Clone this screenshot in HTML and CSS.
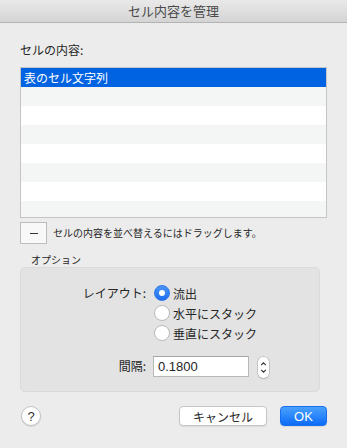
FILE: index.html
```html
<!DOCTYPE html>
<html lang="ja">
<head>
	<meta charset="UTF-8">
	<title>セル内容を管理</title>
	<link rel="stylesheet" href="styles.css">
</head>
<body>
	<!-- ダイアログ全体 -->
	<div class="window">
		<div class="titlebar">セル内容を管理</div>

		<div class="content">
			<div class="field-label">セルの内容:</div>

			<!-- セルの内容リスト -->
			<ul class="list">
				<li class="selected">表のセル文字列</li>
				<li></li>
				<li></li>
				<li></li>
				<li></li>
				<li></li>
				<li></li>
				<li></li>
			</ul>

			<div class="list-tools">
				<button class="minus-btn"><span class="dash"></span></button>
				<span class="hint">セルの内容を並べ替えるにはドラッグします。</span>
			</div>

			<div class="group-title">オプション</div>
			<div class="group">
				<div class="form-row">
					<div class="row-label">レイアウト:</div>
					<div class="radios">
						<label class="radio-item"><span class="radio checked"></span>流出</label>
						<label class="radio-item"><span class="radio"></span>水平にスタック</label>
						<label class="radio-item"><span class="radio"></span>垂直にスタック</label>
					</div>
				</div>
				<div class="form-row spacing-row">
					<div class="row-label">間隔:</div>
					<div class="number-field">0.1800</div>
					<div class="stepper">
						<svg width="11" height="21" viewBox="0 0 11 21">
							<path d="M3.2 8.2 L5.5 5.8 L7.8 8.2" fill="none" stroke="#333" stroke-width="1.1"/>
							<path d="M3.2 12.8 L5.5 15.2 L7.8 12.8" fill="none" stroke="#333" stroke-width="1.1"/>
						</svg>
					</div>
				</div>
			</div>

			<div class="buttons">
				<button class="help-btn">?</button>
				<div class="spacer"></div>
				<button class="push-btn">キャンセル</button>
				<button class="push-btn default">OK</button>
			</div>
		</div>
	</div>
</body>
</html>
```

FILE: styles.css
```css
*{
	margin: 0;
	padding: 0;
	box-sizing: border-box;
}

body{
	background-color: #ececec;
	font-family: "Noto Sans CJK JP", "Liberation Sans", sans-serif;
	color: #262626;
}

.window{
	width: 347px;
	height: 448px;
	background-color: #ececec;
	overflow: hidden;
}

/*タイトルバー*/
.titlebar{
	height: 23px;
	line-height: 22px;
	text-align: center;
	font-size: 13px;
	color: #4a4a4a;
	background: linear-gradient(#e9e9e9, #d4d4d4);
	border-bottom: 1px solid #b3b3b3;
}

.content{
	padding: 0 20px;
}

.field-label{
	margin-top: 19px;
	font-size: 12px;
	line-height: 16px;
}

/*リスト*/
.list{
	list-style: none;
	margin-top: 9px;
	height: 151px;
	border: 1px solid #c4c4c4;
	background-color: #fff;
	overflow: hidden;
}

.list li{
	height: 19px;
	line-height: 19px;
	font-size: 12px;
	padding-left: 3px;
}

.list li:nth-child(even){
	background-color: #f4f5f5;
}

.list li.selected{
	background-color: #0063e1;
	color: #fff;
}

.list-tools{
	display: flex;
	align-items: center;
	margin-top: 4px;
}

.minus-btn{
	width: 27px;
	height: 22px;
	border: 1px solid #bdbdbd;
	background-color: #f8f8f8;
	display: flex;
	align-items: center;
	justify-content: center;
}

.minus-btn .dash{
	display: block;
	width: 8px;
	height: 1px;
	background-color: #333;
}

.hint{
	margin-left: 6px;
	font-size: 10px;
	line-height: 14px;
}

.group-title{
	margin-top: 9px;
	padding-left: 11px;
	font-size: 10px;
	line-height: 14px;
}

/*オプションのボックス*/
.group{
	width: 300px;
	height: 125px;
	background-color: #e3e3e3;
	border: 1px solid #dadada;
	border-radius: 5px;
	padding-top: 15px;
}

.form-row{
	display: flex;
	align-items: flex-start;
}

.row-label{
	width: 125px;
	margin-right: 7px;
	text-align: right;
	font-size: 12px;
	line-height: 20px;
}

.radios{
	display: flex;
	flex-direction: column;
}

.radio-item{
	display: flex;
	align-items: center;
	height: 20px;
	font-size: 12px;
	margin-left: 1px;
}

.radio{
	width: 16px;
	height: 16px;
	border-radius: 50%;
	background-color: #fff;
	border: 1px solid #b9b9b9;
	margin-right: 3px;
	display: flex;
	align-items: center;
	justify-content: center;
}

.radio.checked{
	background: linear-gradient(#4b95f7, #1f6ff0);
	border-color: #2c74e8;
}

.radio.checked::after{
	content: "";
	width: 6px;
	height: 6px;
	border-radius: 50%;
	background-color: #fff;
}

.spacing-row{
	margin-top: 11px;
	align-items: center;
}

.number-field{
	width: 96px;
	height: 21px;
	background-color: #fff;
	border: 1px solid #b8b8b8;
	border-top-color: #a5a5a5;
	font-family: "Liberation Sans", sans-serif;
	font-size: 13px;
	line-height: 19px;
	padding-left: 4px;
}

.stepper{
	margin-left: 9px;
	margin-top: 3px;
	width: 11px;
	height: 21px;
	background-color: #fff;
	border-radius: 5px;
	box-shadow: 0 0 0 0.5px #a9a9a9, 0 1px 1px rgba(0,0,0,0.15);
}

.stepper svg{
	display: block;
}

/*下部のボタン*/
.buttons{
	display: flex;
	align-items: center;
	margin-top: 14px;
}

.spacer{
	flex: 1;
}

.help-btn{
	width: 20px;
	height: 20px;
	margin-left: 1px;
	border-radius: 50%;
	border: 1px solid #c3c3c3;
	background-color: #fff;
	box-shadow: 0 1px 1px rgba(0,0,0,0.1);
	font-family: "Liberation Sans", sans-serif;
	font-size: 13px;
	color: #333;
}

.push-btn{
	height: 20px;
	width: 88px;
	border: 1px solid #c6c6c6;
	border-radius: 4px;
	background-color: #fff;
	box-shadow: 0 1px 1px rgba(0,0,0,0.08);
	font-family: "Noto Sans CJK JP", sans-serif;
	font-size: 12px;
	color: #262626;
}

.push-btn.default{
	width: 47px;
	margin-left: 13px;
	border: 1px solid #1a6ff0;
	background: linear-gradient(#4ba1fd, #0c6cf6);
	color: #fff;
	font-family: "Liberation Sans", sans-serif;
	font-size: 13px;
}
```
